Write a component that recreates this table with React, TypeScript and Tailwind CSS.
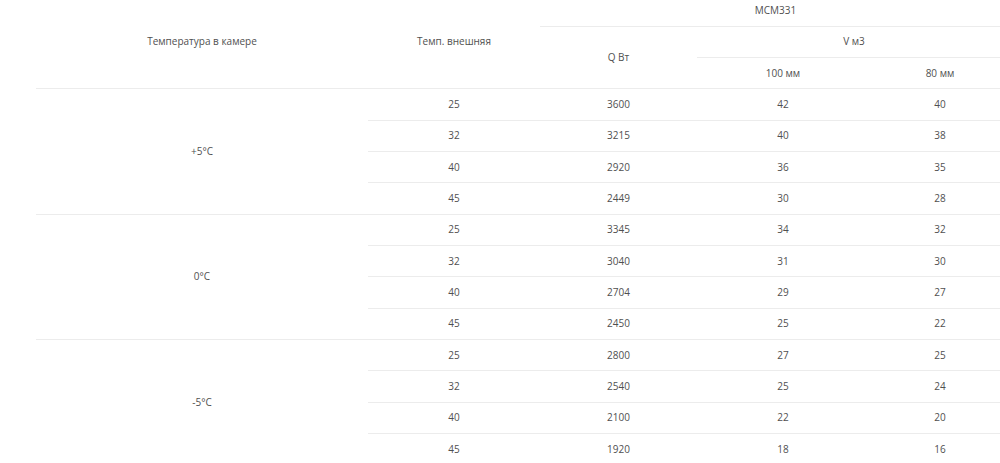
const groups = [
  {
    label: "+5°C",
    rows: [
      ["25", "3600", "42", "40"],
      ["32", "3215", "40", "38"],
      ["40", "2920", "36", "35"],
      ["45", "2449", "30", "28"],
    ],
  },
  {
    label: "0°C",
    rows: [
      ["25", "3345", "34", "32"],
      ["32", "3040", "31", "30"],
      ["40", "2704", "29", "27"],
      ["45", "2450", "25", "22"],
    ],
  },
  {
    label: "-5°C",
    rows: [
      ["25", "2800", "27", "25"],
      ["32", "2540", "25", "24"],
      ["40", "2100", "22", "20"],
      ["45", "1920", "18", "16"],
    ],
  },
];

const cell = "h-[31.33px] p-0 text-center align-middle font-normal border-b border-[#ececec]";

export default function App() {
  return (
    <div className="w-[1000px] h-[463px] overflow-hidden bg-white">
      <div className="ml-[36px] -mt-[5px] w-[975px]">
        <table
          className="w-full table-fixed border-collapse text-[10px] text-[#505050]"
          style={{ fontFamily: '"Open Sans", "Noto Sans", sans-serif' }}
        >
          <colgroup>
            <col className="w-[332px]" />
            <col className="w-[172px]" />
            <col className="w-[157px]" />
            <col className="w-[172px]" />
            <col className="w-[142px]" />
          </colgroup>
          <thead>
            <tr>
              <th rowSpan={3} className={cell}>Температура в камере</th>
              <th rowSpan={3} className={cell}>Темп. внешняя</th>
              <th colSpan={3} className={cell}>MCM331</th>
            </tr>
            <tr>
              <th rowSpan={2} className={cell}>Q Вт</th>
              <th colSpan={2} className={cell}>V м3</th>
            </tr>
            <tr>
              <th className={cell}>100 мм</th>
              <th className={cell}>80 мм</th>
            </tr>
          </thead>
          <tbody>
            {groups.map((g) =>
              g.rows.map((r, i) => (
                <tr key={g.label + i}>
                  {i === 0 && (
                    <td rowSpan={4} className={cell}>
                      {g.label}
                    </td>
                  )}
                  {r.map((v, j) => (
                    <td key={j} className={cell}>
                      {v}
                    </td>
                  ))}
                </tr>
              ))
            )}
          </tbody>
        </table>
      </div>
    </div>
  );
}
